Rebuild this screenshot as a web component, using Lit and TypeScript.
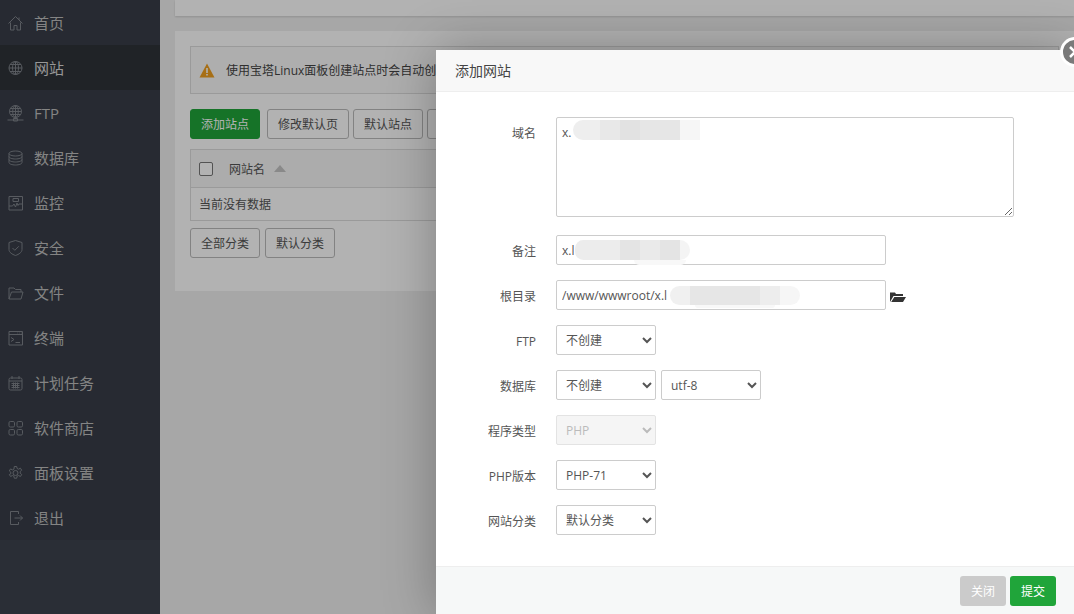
import { LitElement, html, css, svg } from "lit";
import { customElement } from "lit/decorators.js";

const icons: Record<string, unknown> = {
  home: svg`<path d="M.5 8.500 7.500 1.500l7 7M2.500 7.500V15h3.500v-4.500h3V15h3.500V7.500M11 2.500v2.500"/>`,
  globe: svg`<circle cx="7.500" cy="8" r="6.500"/><ellipse cx="7.500" cy="8" rx="3" ry="6.500"/><path d="M1 8h13M2 4.500h11M2 11.500h11M7.500 1.500v13"/>`,
  ftp: svg`<circle cx="7.500" cy="6.500" r="6"/><ellipse cx="7.500" cy="6.500" rx="2.800" ry="6"/><path d="M1.500 6.500h12M2.500 3.500h10M2.500 9.500h10M7.500 .5v12M-.5 15h16M5.500 13.500h4v2.500h-4z"/>`,
  db: svg`<ellipse cx="7.500" cy="3.500" rx="6.500" ry="2.500"/><path d="M1 3.500v9c0 1.400 2.900 2.500 6.500 2.500s6.500-1.100 6.500-2.500v-9M1 6.500c0 1.400 2.900 2.500 6.500 2.500S14 7.900 14 6.500M1 9.500c0 1.400 2.900 2.500 6.500 2.500s6.500-1.100 6.500-2.500"/>`,
  monitor: svg`<path d="M1 1.500h13.500V15H1z"/><path d="M1 11h3.500l1.500-2 1.500 3 1.500-4 1 2.500 1-1.500h3.500M5 3.500h5.500v3H5z"/>`,
  shield: svg`<path d="M7.500 .5 14 2.500v7c0 2.800-3 4.800-6.500 6C4 14.300 1 12.300 1 9.500v-7z"/><path d="m4.500 8 2.300 2.300 4-4"/>`,
  folder: svg`<path d="M1 14V3h5l1.500 1.500H13V7M1 14h12l2-7H3.500L1 14z"/>`,
  term: svg`<path d="M1 1.500h13.500V15H1zM1 4.500h13.500M3 7.500l3 2-3 2M7.500 12.500H12M9.500 3h.6M11.500 3h.6M13 3h.6" />`,
  cal: svg`<path d="M2.500 3h10a1.500 1.500 0 0 1 1.500 1.500v9a1.500 1.500 0 0 1-1.500 1.500h-10A1.500 1.500 0 0 1 1 13.500v-9A1.500 1.500 0 0 1 2.500 3zM4 1v3M11 1v3M1 6h13M3.500 8.500h8M3.500 10.500h8M3.500 12.500h8M5.500 7.500v6M7.500 7.500v6M9.500 7.500v6"/>`,
  apps: svg`<rect x="1" y="1.500" width="5.500" height="5.500" rx="1.300"/><rect x="9" y="1.500" width="5.500" height="5.500" rx="1.300"/><rect x="1" y="9.500" width="5.500" height="5.500" rx="1.300"/><rect x="9" y="9.500" width="5.500" height="5.500" rx="1.300"/>`,
  gear: svg`<circle cx="7.500" cy="8" r="2.500"/><path d="M6.300 1.500h2.400l.4 2 1.500.7 1.800-1 1.300 2-1.500 1.300v1.700l1.500 1.300-1.300 2-1.800-1-1.500.7-.4 2H6.300l-.4-2-1.500-.7-1.800 1-1.300-2L2.800 8.800V7.200L1.300 5.900l1.300-2 1.800 1 1.500-.7z"/>`,
  exit: svg`<path d="M10.500 4V1.500H2.500v13h8V12M6.500 8h8M12 5.500 14.500 8 12 10.500"/>`,
};

const NAV = [
  ["home", "首页"],
  ["globe", "网站"],
  ["ftp", "FTP"],
  ["db", "数据库"],
  ["monitor", "监控"],
  ["shield", "安全"],
  ["folder", "文件"],
  ["term", "终端"],
  ["cal", "计划任务"],
  ["apps", "软件商店"],
  ["gear", "面板设置"],
  ["exit", "退出"],
];

@customElement("app-root")
export class AppRoot extends LitElement {
  static styles = css`
    :host {
      display: flex;
      position: relative;
      width: 1074px;
      height: 614px;
      overflow: hidden;
      background: #f0f0f0;
      font-family: "Open Sans", "Noto Sans CJK SC", sans-serif;
      font-size: 12px;
      color: #555;
    }
    * { box-sizing: border-box; }
    .side { width: 160px; flex: none; background: #3d434e; }
    .nav { height: 540px; background: #383d48; }
    .item { height: 45px; display: flex; align-items: center; gap: 11px; padding-left: 8px; font-size: 15px; color: #bdbdbd; }
    .item.on { background: #2f3339; color: #d8d8d8; }
    .item svg { width: 15px; height: 16px; flex: none; fill: none; stroke: #7e838a; stroke-width: 1; overflow: visible; }
    .main { flex: 1; padding: 0 0 0 15px; min-width: 0; }
    .top { height: 16px; background: #fff; box-shadow: 0 1px 2px rgba(0,0,0,.15); margin-bottom: 15px; }
    .card { height: 260px; background: #fff; padding: 15px; }
    .alert { height: 48px; border: 1px solid #ddd; background: #fafafa; display: flex; align-items: center; padding-left: 8px; gap: 11px; white-space: nowrap; color: #444; }
    .alert svg { width: 16px; height: 15px; flex: none; }
    .bar { display: flex; gap: 4px; margin-top: 15px; white-space: nowrap; }
    .btn { height: 30px; padding: 0 10px; border: 1px solid #bbb; border-radius: 3px; background: #fff; color: #555; font: inherit; display: inline-flex; align-items: center; }
    .btn.green { background: #20a53a; border-color: #20a53a; color: #fff; margin-right: 3px; }
    .btn.blank { width: 40px; }
    .table { margin-top: 10px; border: 1px solid #ddd; }
    .th { height: 38px; background: #f6f6f6; border-bottom: 1px solid #ddd; display: flex; align-items: center; padding-left: 8px; font-size: 12px; }
    .check { width: 14px; height: 14px; border: 1px solid #777; border-radius: 2px; background: #fff; margin-right: 16px; }
    .tri { width: 0; height: 0; border: 6px solid transparent; border-top: 0; border-bottom: 7px solid #c4c4c4; margin-left: 9px; }
    .td { height: 32px; display: flex; align-items: center; padding-left: 8px; }
    .bar2 { display: flex; gap: 5px; margin-top: 7px; }
    .overlay { position: absolute; inset: 0; background: rgba(0,0,0,.3); }
    .modal { position: absolute; left: 436px; top: 50px; width: 638px; height: 564px; background: #fff; box-shadow: 1px 1px 50px rgba(0,0,0,.3); display: flex; flex-direction: column; }
    .title { height: 42px; flex: none; background: #f8f8f8; border-bottom: 1px solid #eee; padding: 0 0 2px 19px; display: flex; align-items: center; font-size: 14px; color: #444; }
    .close { position: absolute; right: -16px; top: -13px; width: 30px; height: 30px; border-radius: 50%; border: 3px solid #fff; background: #7a7a7a; }
    .close svg { position: absolute; left: 4px; top: 4px; width: 16px; height: 16px; stroke: #fff; stroke-width: 2.500; fill: none; }
    .form { flex: 1; padding-top: 25px; display: flex; flex-direction: column; gap: 15px; }
    .row { display: flex; align-items: flex-start; }
    .field { position: relative; }
    .tall { margin-bottom: 3px; }
    .label { width: 100px; margin-right: 20px; text-align: right; line-height: 20px; padding-top: 7px; color: #555; flex: none; }
    textarea, input, select { font: inherit; color: #555; border: 1px solid #ccc; border-radius: 2px; background: #fff; outline: none; margin: 0; }
    textarea { width: 458px; height: 100px; padding: 6px 5px; resize: both; display: block; }
    input { width: 330px; height: 30px; padding: 0 5px; display: block; }
    select { width: 100px; height: 30px; padding: 0 0 0 5px; display: block; }
    select + select { margin-left: 5px; }
    select:disabled { background: #f5f5f5; color: #bbb; opacity: 1; border-color: #e3e3e3; }
    .fold { width: 16px; height: 11px; margin: 11px 0 0 4px; flex: none; }
    .mask { position: absolute; height: 20px; }
    .mask::after { content: ""; position: absolute; background: #f8f8f8; border-radius: 0 0 6px 6px; }
    .m1 { left: 17px; top: 3px; width: 127px; border-radius: 10px 0 0 10px; background: linear-gradient(90deg, #eee 0 27px, #e8e8e8 27px 47px, #e2e2e2 47px 67px, #e6e6e6 67px 107px, #f6f6f6 107px); }
    .m2 { left: 19px; top: 5px; width: 115px; border-radius: 10px 12px 12px 10px; background: linear-gradient(90deg, #ececec 0 45px, #e4e4e4 45px 65px, #eaeaea 65px 85px, #e4e4e4 85px 105px, #f4f4f4 105px); }
    .m2::after { left: 59px; top: 20px; width: 52px; height: 5px; }
    .m3 { left: 114px; top: 6px; width: 130px; height: 19px; border-radius: 10px; background: linear-gradient(90deg, #f0f0f0 0 20px, #e6e6e6 20px 90px, #ededed 90px 110px, #f6f6f6 110px); }
    .m3::after { left: 25px; top: 19px; width: 80px; height: 3px; }
    .foot { height: 48px; flex: none; background: #f6f8f8; border-top: 1px solid #eee; display: flex; justify-content: flex-end; align-items: center; gap: 4px; padding-right: 18px; }
    .fbtn { width: 46px; height: 30px; border-radius: 3px; color: #fff; display: flex; align-items: center; justify-content: center; background: #20a53a; }
    .fbtn.gray { background: #cbcbcb; }
  `;

  render() {
    return html`
      <aside class="side">
        <nav class="nav">
          ${NAV.map(([ic, t]) => html`<div class="item ${t === "网站" ? "on" : ""}"><svg viewBox="0 0 15 16">${icons[ic]}</svg><span>${t}</span></div>`)}
        </nav>
      </aside>
      <main class="main">
        <div class="top"></div>
        <section class="card">
          <div class="alert">
            <svg viewBox="0 0 16 15"><path d="M8 .5 15.500 14.500H.5z" fill="#f0a020"/><path d="M7.200 5h1.600v5H7.200zM7.200 11h1.600v1.600H7.200z" fill="#fff"/></svg>
            <span>使用宝塔Linux面板创建站点时会自动创</span>
          </div>
          <div class="bar">
            <span class="btn green">添加站点</span><span class="btn">修改默认页</span><span class="btn">默认站点</span><span class="btn blank"></span>
          </div>
          <div class="table">
            <div class="th"><span class="check"></span><span>网站名</span><span class="tri"></span></div>
            <div class="td">当前没有数据</div>
          </div>
          <div class="bar2"><span class="btn">全部分类</span><span class="btn">默认分类</span></div>
        </section>
      </main>
      <div class="overlay"></div>
      <div class="modal">
        <div class="title">添加网站</div>
        <div class="close"><svg viewBox="0 0 16 16"><path d="m3 3 10 10M13 3 3 13"/></svg></div>
        <div class="form">
          <div class="row tall"><span class="label">域名</span><div class="field"><textarea>x.</textarea><div class="mask m1"></div></div></div>
          <div class="row"><span class="label">备注</span><div class="field"><input value="x.l" /><div class="mask m2"></div></div></div>
          <div class="row"><span class="label">根目录</span><div class="field"><input value="/www/wwwroot/x.l" /><div class="mask m3"></div></div>
            <svg class="fold" viewBox="0 0 16 11"><path d="M0 11V1.500h5L6 3h7v2H3.500L0 11zM1.200 11 4.300 6H16l-3 5z" fill="#333"/></svg></div>
          <div class="row"><span class="label">FTP</span><select><option>不创建</option></select></div>
          <div class="row"><span class="label">数据库</span><select><option>不创建</option></select><select><option>utf-8</option></select></div>
          <div class="row"><span class="label">程序类型</span><select disabled><option>PHP</option></select></div>
          <div class="row"><span class="label">PHP版本</span><select><option>PHP-71</option></select></div>
          <div class="row"><span class="label">网站分类</span><select><option>默认分类</option></select></div>
        </div>
        <div class="foot"><span class="fbtn gray">关闭</span><span class="fbtn">提交</span></div>
      </div>
    `;
  }
}
